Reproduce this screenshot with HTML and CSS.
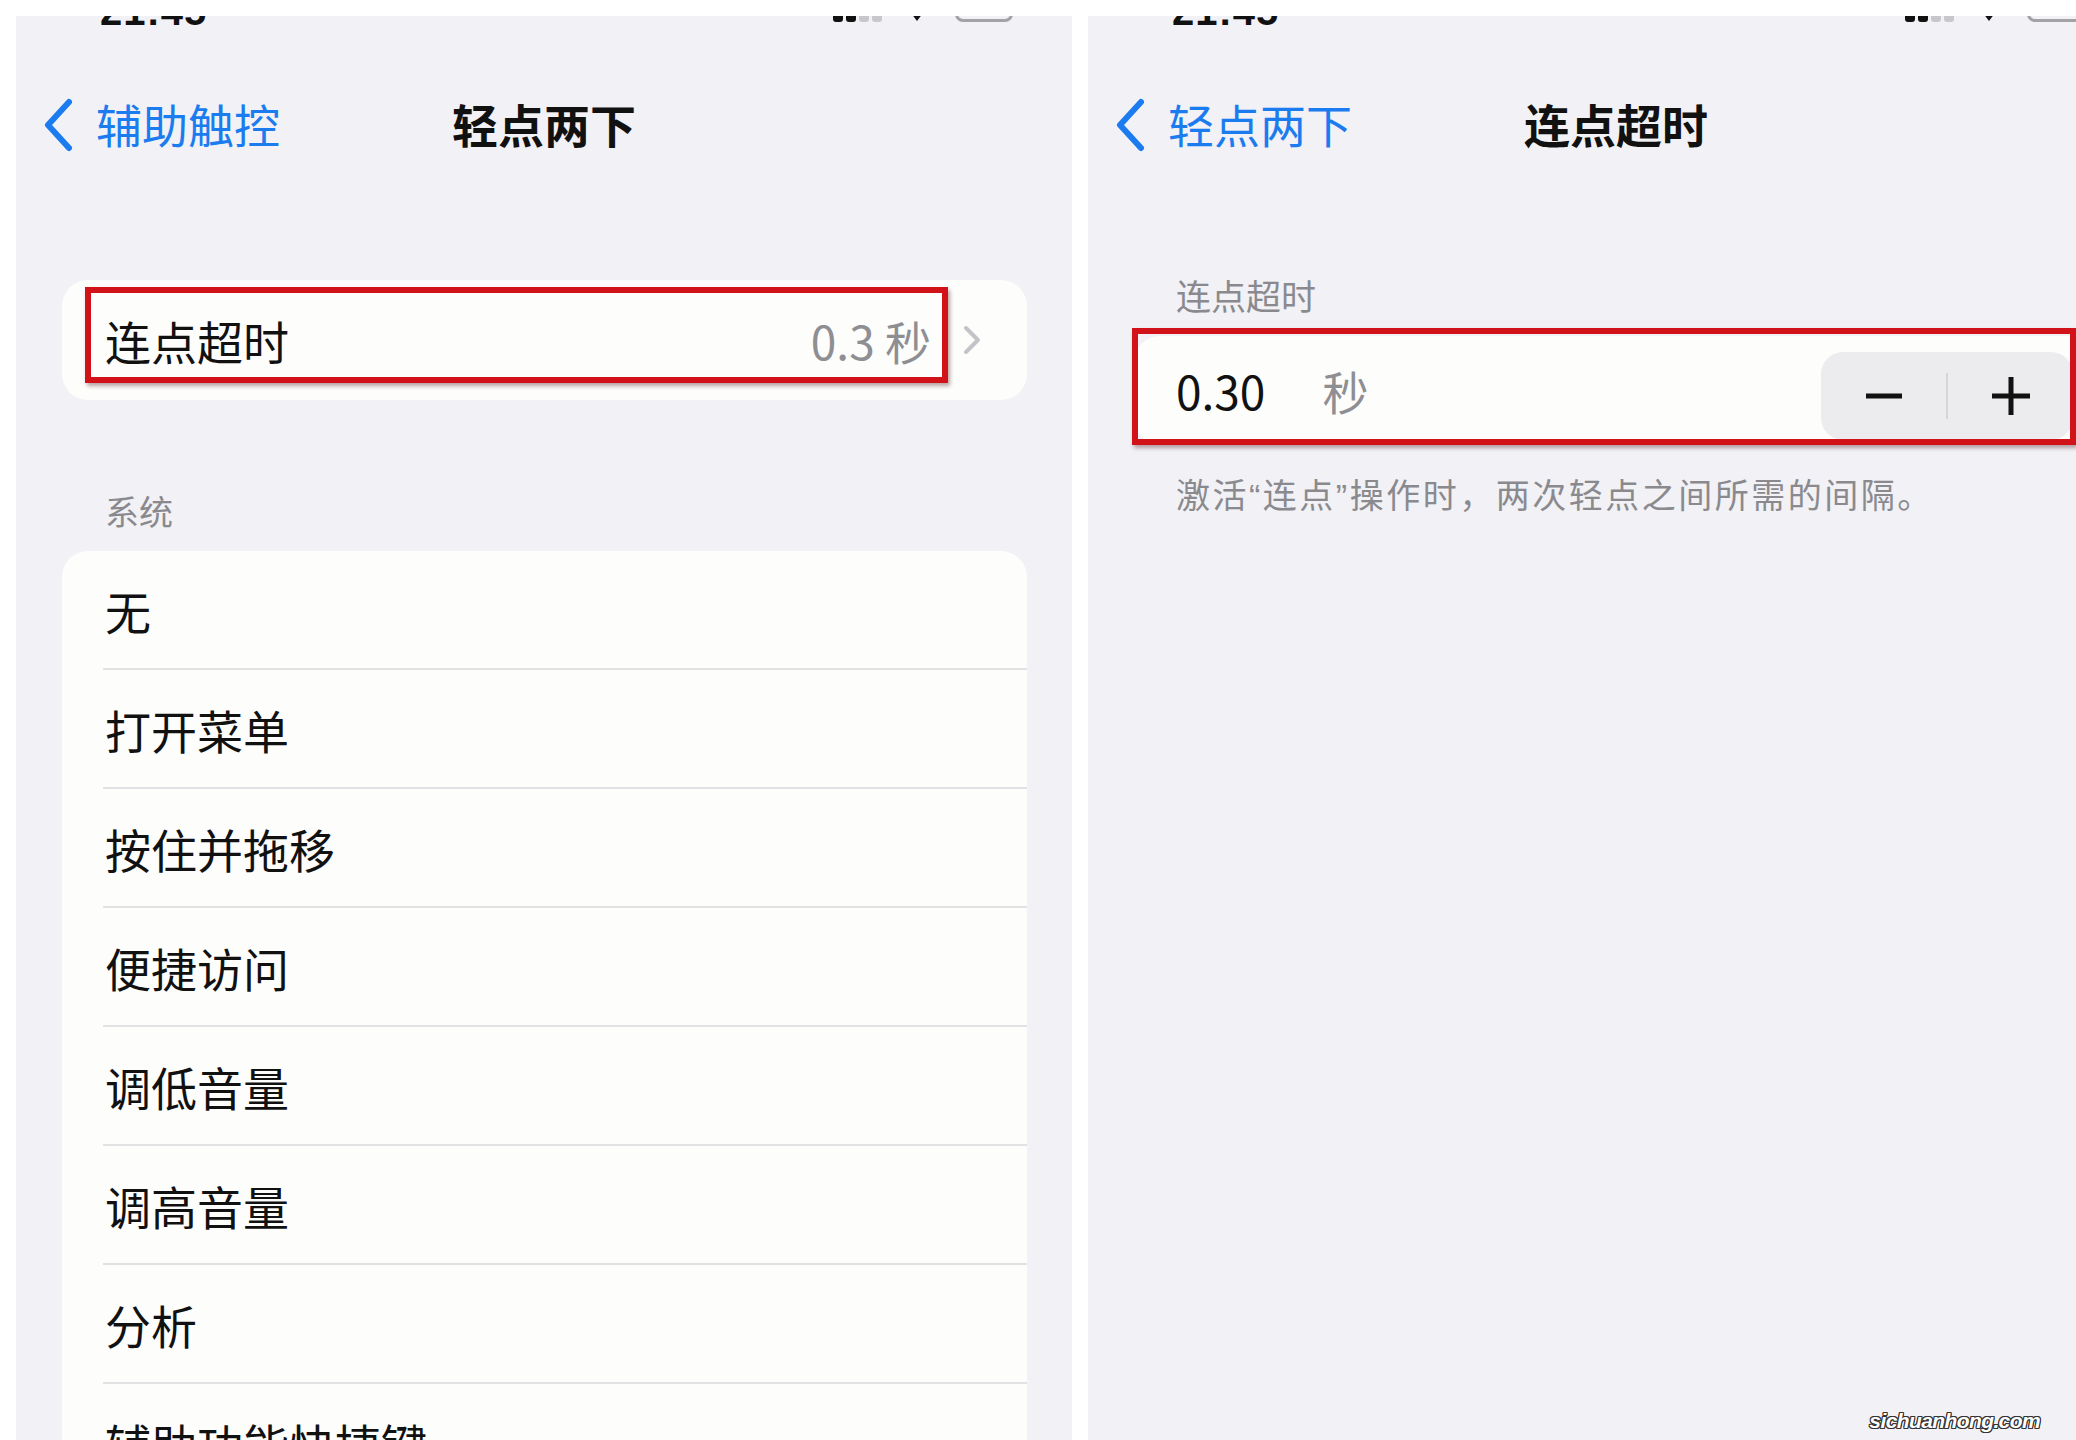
FILE: index.html
```html
<!DOCTYPE html>
<html lang="zh-CN">
<head>
<meta charset="utf-8">
<title>连点超时</title>
<link rel="stylesheet" href="styles.css">
</head>
<body>
<div class="screen">
  <section class="panel">
    <div class="status">
      <span class="time">21:45</span>
      <span class="signal"><i class="on b1"></i><i class="on b2"></i><i class="b3"></i><i class="b4"></i></span>
      <svg class="wifi" width="16" height="12" viewBox="0 0 16 12"><path d="M8 11 L2 3 Q8 -1 14 3 Z" fill="#111"/></svg>
      <span class="battery"></span>
    </div>
    <header class="nav">
      <a class="back">
        <svg class="back-chev" width="32" height="54" viewBox="0 0 32 54"><path d="M27 4 L6 27 L27 50" fill="none" stroke="#1b7cf0" stroke-width="6" stroke-linecap="round" stroke-linejoin="round"/></svg>
        <span>辅助触控</span>
      </a>
      <h1 class="title">轻点两下</h1>
      <span></span>
    </header>

    <div class="card single">
      <span class="row-label">连点超时</span>
      <span class="value">0.3 秒</span>
      <svg class="chev" width="22" height="32" viewBox="0 0 22 32"><path d="M5 4 L17 16 L5 28" fill="none" stroke="#c4c4c8" stroke-width="4" stroke-linecap="round" stroke-linejoin="round"/></svg>
      <div class="highlight hl-left"></div>
    </div>

    <div class="section-title">系统</div>
    <div class="card list">
      <div class="item">无</div>
      <div class="item">打开菜单</div>
      <div class="item">按住并拖移</div>
      <div class="item">便捷访问</div>
      <div class="item">调低音量</div>
      <div class="item">调高音量</div>
      <div class="item">分析</div>
      <div class="item">辅助功能快捷键</div>
    </div>
  </section>

  <section class="panel">
    <div class="status">
      <span class="time">21:45</span>
      <span class="signal"><i class="on b1"></i><i class="on b2"></i><i class="b3"></i><i class="b4"></i></span>
      <svg class="wifi" width="16" height="12" viewBox="0 0 16 12"><path d="M8 11 L2 3 Q8 -1 14 3 Z" fill="#111"/></svg>
      <span class="battery"></span>
    </div>
    <header class="nav">
      <a class="back">
        <svg class="back-chev" width="32" height="54" viewBox="0 0 32 54"><path d="M27 4 L6 27 L27 50" fill="none" stroke="#1b7cf0" stroke-width="6" stroke-linecap="round" stroke-linejoin="round"/></svg>
        <span>轻点两下</span>
      </a>
      <h1 class="title">连点超时</h1>
      <span></span>
    </header>

    <div class="group-title">连点超时</div>
    <div class="card stepper-card">
      <span class="num">0.30</span>
      <span class="unit">秒</span>
      <div class="stepper">
        <span class="step">
          <svg width="40" height="40" viewBox="0 0 40 40"><path d="M2 20 H38" stroke="#111" stroke-width="5"/></svg>
        </span>
        <span class="step-div"></span>
        <span class="step">
          <svg width="40" height="40" viewBox="0 0 40 40"><path d="M1 20 H39 M20 1 V39" stroke="#111" stroke-width="5"/></svg>
        </span>
      </div>
      <div class="highlight hl-right"></div>
    </div>
    <p class="footnote">激活<span class="q">“</span>连点<span class="q">”</span>操作时，两次轻点之间所需的间隔。</p>
  </section>

  <div class="watermark">sichuanhong.com</div>
</div>
</body>
</html>
```

FILE: styles.css
```css
html, body {
  margin: 0;
  padding: 0;
  background: #ffffff;
  overflow: hidden;
}

.screen {
  position: relative;
  width: 2076px;
  height: 1440px;
  box-sizing: border-box;
  padding: 16px 0 0 16px;
  display: flex;
  gap: 16px;
  overflow: hidden;
  font-family: "Noto Sans CJK SC", "Noto Sans", sans-serif;
  color: #111111;
}

.panel {
  flex: 0 0 1056px;
  height: 1424px;
  background: #f1f1f6;
  overflow: hidden;
}

/* status bar (mostly cut off at the top) */
.status {
  display: flex;
  align-items: flex-end;
  height: 40px;
  margin-top: -34px;
}

.time {
  width: 140px;
  margin-left: 84px;
  margin-bottom: -9px;
  font-family: "Liberation Sans", sans-serif;
  font-weight: 700;
  font-size: 40px;
  line-height: 40px;
  letter-spacing: 1px;
}

.signal {
  display: flex;
  align-items: flex-end;
  gap: 3px;
  margin-left: 593px;
}

.signal i {
  display: block;
  width: 10px;
  border-radius: 3px;
  background: #c8c8cc;
}

.signal i.on { background: #111111; }
.signal .b1 { height: 10px; }
.signal .b2 { height: 14px; }
.signal .b3 { height: 18px; }
.signal .b4 { height: 22px; }

.wifi {
  display: block;
  margin-left: 27px;
  margin-bottom: 0;
}

.battery {
  display: block;
  width: 58px;
  height: 26px;
  margin-left: 30px;
  box-sizing: border-box;
  border: 3px solid #a3a3a6;
  border-radius: 8px;
}

/* navigation bar */
.nav {
  display: grid;
  grid-template-columns: 1fr auto 1fr;
  align-items: center;
  height: 88px;
  margin-top: 57px;
}

.back {
  display: flex;
  align-items: center;
  gap: 22px;
  padding-left: 26px;
  color: #1b7cf0;
  font-size: 46px;
  line-height: 1;
}

.back-chev { display: block; flex: none; margin-top: 4px; }

.title {
  margin: 0;
  font-size: 46px;
  font-weight: 700;
  line-height: 1;
  color: #111111;
}

/* cards */
.card {
  position: relative;
  background: #fdfdfc;
  margin-left: 46px;
  margin-right: 45px;
}

.single {
  margin-top: 113px;
  height: 120px;
  border-radius: 26px;
  display: flex;
  align-items: center;
  padding: 0 44px 0 43px;
}

.row-label {
  font-size: 46px;
  line-height: 1;
}

.value {
  margin-left: auto;
  font-size: 46px;
  line-height: 1;
  color: #8e8e93;
}

.chev {
  display: block;
  margin-left: 30px;
  flex: none;
}

.highlight {
  position: absolute;
  box-sizing: border-box;
  border: 6px solid #d11319;
  box-shadow: 2px 3px 4px rgba(60, 0, 0, 0.35);
  pointer-events: none;
}

.hl-left {
  left: 23px;
  top: 7px;
  width: 863px;
  height: 96px;
}

.section-title {
  margin: 91px 0 0 89px;
  font-size: 34px;
  line-height: 40px;
  color: #8a8a8e;
}

.list {
  margin-top: 20px;
  border-radius: 26px 26px 0 0;
}

.item {
  height: 119px;
  box-sizing: border-box;
  margin-left: 41px;
  padding-left: 2px;
  border-bottom: 2px solid #e2e2e4;
  display: flex;
  align-items: center;
  font-size: 46px;
  line-height: 1;
}

/* right panel */
.group-title {
  margin: 108px 0 0 88px;
  font-size: 35px;
  line-height: 40px;
  color: #8a8a8e;
}

.stepper-card {
  margin-top: 21px;
  height: 108px;
  border-radius: 26px;
  display: flex;
  align-items: center;
  padding: 0 26px 0 42px;
}

.num {
  font-size: 46px;
  line-height: 1;
  color: #111111;
}

.unit {
  margin-left: 57px;
  font-size: 46px;
  line-height: 1;
  color: #8e8e93;
}

.stepper {
  margin-left: auto;
  width: 252px;
  height: 88px;
  border-radius: 22px;
  background: #ececee;
  display: flex;
  align-items: center;
  margin-top: 12px;
}

.step {
  flex: 1;
  display: flex;
  align-items: center;
  justify-content: center;
}

.step svg { display: block; }

.step-div {
  width: 2px;
  height: 46px;
  background: #d6d6d9;
}

.hl-right {
  left: -2px;
  top: -8px;
  width: 944px;
  height: 117px;
}

.footnote {
  margin: 30px 0 0 88px;
  font-size: 34px;
  line-height: 40px;
  letter-spacing: 2.5px;
  color: #8a8a8e;
}

.footnote .q {
  font-family: "Liberation Sans", sans-serif;
}

.watermark {
  position: absolute;
  right: 36px;
  bottom: 9px;
  font-family: "Liberation Sans", sans-serif;
  font-weight: 700;
  font-style: italic;
  font-size: 21px;
  line-height: 1;
  letter-spacing: -0.6px;
  color: #ffffff;
  text-shadow:
    -1px -1px 0 #333, 1px -1px 0 #333, -1px 1px 0 #333, 1px 1px 0 #333,
    0 -1px 0 #333, 0 1px 0 #333, -1px 0 0 #333, 1px 0 0 #333;
}
```
